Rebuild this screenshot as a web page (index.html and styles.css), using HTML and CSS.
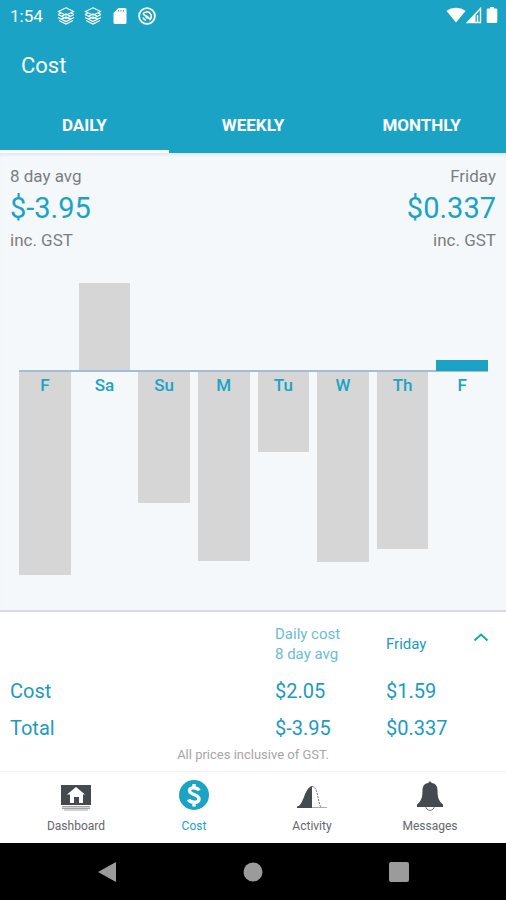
FILE: index.html
```
<!DOCTYPE html>
<html lang="en">

<head>
    <meta charset="UTF-8">
    <meta name="viewport" content="width=device-width, initial-scale=1.0">
    <title>Cost</title>
    <link rel="stylesheet" href="styles.css">
</head>

<body>
    <header class="header">
        <div class="status">
            <span class="time">1:54</span>
            <svg class="layers" width="18" height="18" viewBox="0 0 18 18">
                <path d="M9 .800L16.500 4.500 9 8.200 1.500 4.500zM1 7.500L9 11.500l8-4M1 10.500L9 14.500l8-4M2 13.500L9 17l7-3.500M1 7.500L4 6M17 7.500L14 6M4 9.500l5-2.500 5 2.500M4 12.500L9 10l5 2.500" />
            </svg>
            <svg class="layers" width="18" height="18" viewBox="0 0 18 18">
                <path d="M9 .800L16.500 4.500 9 8.200 1.500 4.500zM1 7.500L9 11.500l8-4M1 10.500L9 14.500l8-4M2 13.500L9 17l7-3.500M1 7.500L4 6M17 7.500L14 6M4 9.500l5-2.500 5 2.500M4 12.500L9 10l5 2.500" />
            </svg>
            <svg width="18" height="18" viewBox="0 0 18 18">
                <path fill="#fff" fill-rule="evenodd" d="M7.500 1H14a1.500 1.500 0 0 1 1.500 1.500v13A1.500 1.500 0 0 1 14 17H4a1.500 1.500 0 0 1-1.500-1.500V6zM7 3v1.500h1V3zM9.500 3v1.500h1V3zM12 3v1.500h1V3z" />
            </svg>
            <svg width="18" height="18" viewBox="0 0 18 18">
                <circle cx="9" cy="9" r="7.900" fill="none" stroke="#fff" stroke-width="1.800" />
                <path fill="none" stroke="#fff" stroke-width="1.600" d="M5 7a4.500 4.500 0 1 1 6.500 6M5 7l7 5M5 10.500a4 4 0 0 0 3 2.700" />
                <circle cx="9" cy="10" r="1.600" fill="#fff" />
            </svg>
            <div class="signals">
                <svg width="20" height="18" viewBox="0 0 20 18">
                    <path fill="#fff" d="M.500 4C6-.200 14-.200 19.500 4L10 15.500z" />
                </svg>
                <svg width="17" height="18" viewBox="0 0 17 18">
                    <path fill="none" stroke="#fff" stroke-width="1.400" d="M14.500 1.500v14H1.500zM11.500 8v7" />
                    <path fill="#fff" d="M9.500 7v9H1z" />
                </svg>
                <svg width="18" height="18" viewBox="0 0 18 18">
                    <path fill="#fff" d="M7 0h4v1.500h2a1.300 1.300 0 0 1 1.300 1.300v12A1.300 1.300 0 0 1 13 16.100H5a1.300 1.300 0 0 1-1.300-1.300v-12A1.300 1.300 0 0 1 5 1.500h2z" />
                </svg>
            </div>
        </div>
        <h1 class="title">Cost</h1>
        <div class="tabs">
            <button class="tab tab-selected" type="button">DAILY</button>
            <button class="tab" type="button">WEEKLY</button>
            <button class="tab" type="button">MONTHLY</button>
        </div>
    </header>

    <main class="main">
        <div class="summary">
            <div>
                <p>8 day avg</p>
                <p class="amount">$-3.95</p>
                <p>inc. GST</p>
            </div>
            <div class="summary-right">
                <p>Friday</p>
                <p class="amount">$0.337</p>
                <p>inc. GST</p>
            </div>
        </div>

        <div class="chart">
            <!-- credits above the line, costs below -->
            <div class="row row-up">
                <div class="bar"></div>
                <div class="bar" style="height: 87px"></div>
                <div class="bar"></div>
                <div class="bar"></div>
                <div class="bar"></div>
                <div class="bar"></div>
                <div class="bar"></div>
                <div class="bar bar-selected" style="height: 11px"></div>
            </div>
            <div class="row row-down">
                <div class="bar" style="height: 203px">F</div>
                <div class="bar bar-empty">Sa</div>
                <div class="bar" style="height: 131px">Su</div>
                <div class="bar" style="height: 189px">M</div>
                <div class="bar" style="height: 80px">Tu</div>
                <div class="bar" style="height: 190px">W</div>
                <div class="bar" style="height: 177px">Th</div>
                <div class="bar bar-empty">F</div>
            </div>
        </div>
    </main>

    <section class="details">
        <table class="costs">
            <thead>
                <tr>
                    <td></td>
                    <th class="average" scope="col">Daily cost<br>8 day avg</th>
                    <th scope="col">Friday</th>
                    <td class="toggle-cell">
                        <button class="toggle" type="button" aria-label="Collapse">
                            <svg width="16" height="10" viewBox="0 0 16 10">
                                <path fill="none" stroke="#12a8b0" stroke-width="2" d="M1.500 8.500L8 2.500l6.500 6" />
                            </svg>
                        </button>
                    </td>
                </tr>
            </thead>
            <tbody>
                <tr>
                    <th scope="row">Cost</th>
                    <td>$2.05</td>
                    <td colspan="2">$1.59</td>
                </tr>
                <tr>
                    <th scope="row">Total</th>
                    <td>$-3.95</td>
                    <td colspan="2">$0.337</td>
                </tr>
            </tbody>
        </table>
        <p class="note">All prices inclusive of GST.</p>
    </section>

    <nav class="nav">
        <a href="#dashboard">
            <svg width="32" height="32" viewBox="0 0 32 32">
                <path fill="#454a50" d="M1 6h30v20H1z" />
                <path fill="#fff" d="M16 8l9 7.500h-2V24h-4v-6h-5v6h-4v-8.500H7z" />
                <path fill="#a4a4a4" d="M2 27h28v1.500H2zM2 29h28v1H2zM4 30.500h24v1H4z" />
            </svg>
            <span>Dashboard</span>
        </a>
        <a class="nav-selected" href="#cost">
            <svg width="32" height="32" viewBox="0 0 32 32">
                <circle cx="16" cy="16" r="15" fill="#1ba3c6" />
                <path fill="none" stroke="#fff" stroke-width="3.400" d="M21 11.500C20 8.500 12 7.500 11.500 11.500c-.4 4.500 9.500 3.500 9.500 8.500 0 4.500-9 4-10.500.5M16 5v4M16 23v4.500" />
            </svg>
            <span>Cost</span>
        </a>
        <a href="#activity">
            <svg width="32" height="32" viewBox="0 0 32 32">
                <path fill="#454a50" d="M1 29v-1.500c7-1 7-18.500 15-20.500v22z" />
                <path fill="none" stroke="#777" stroke-dasharray="2 1" d="M16 7.500c6-1 6 18 9 20.500" />
                <path fill="none" stroke="#aaa" d="M16 28.500h15" />
            </svg>
            <span>Activity</span>
        </a>
        <a href="#messages">
            <svg width="32" height="32" viewBox="0 0 32 32">
                <circle cx="16" cy="27" r="4.300" fill="#fff" stroke="#777" />
                <path fill="#454a50" d="M14.500 4c0-2 3-2 3 0 4.500.5 6 3.500 6 7.500 0 7.500 1.500 10.500 5.500 14V28H3v-2.500C7 22 8.500 19 8.500 11.500c0-4 1.500-7 6-7.500z" />
            </svg>
            <span>Messages</span>
        </a>
    </nav>

    <footer class="system">
        <button type="button" aria-label="Back">
            <svg width="22" height="22" viewBox="0 0 22 22">
                <path fill="#9b9b9b" d="M20 1v20L2 11z" />
            </svg>
        </button>
        <button type="button" aria-label="Home">
            <svg width="22" height="22" viewBox="0 0 22 22">
                <circle cx="11" cy="11" r="9.500" fill="#9b9b9b" />
            </svg>
        </button>
        <button type="button" aria-label="Recent apps">
            <svg width="22" height="22" viewBox="0 0 22 22">
                <rect x="1" y="1" width="20" height="20" rx="2" fill="#9b9b9b" />
            </svg>
        </button>
    </footer>
</body>

</html>
```
FILE: styles.css
```
* {
    margin: 0;
    padding: 0;
    box-sizing: border-box;
}

body {
    display: flex;
    flex-direction: column;
    min-height: 100vh;
    font-family: Roboto, "Liberation Sans", sans-serif;
    background: #fff;
    color: #7b7e81;
}

svg {
    display: block;
}

button {
    border: none;
    background: none;
    font-family: inherit;
    cursor: pointer;
}

.header {
    background: #1ba3c6;
    color: #fff;
}

.status {
    display: flex;
    align-items: center;
    gap: 9px;
    height: 32px;
    padding: 0 5px 0 10px;
}

.time {
    margin-right: 5px;
    font-size: 17px;
}

.layers path {
    fill: none;
    stroke: #fff;
    stroke-width: 1.2;
}

.signals {
    display: flex;
    margin-left: auto;
}

.title {
    height: 66px;
    padding: 0 21px;
    font-size: 22px;
    font-weight: 400;
    line-height: 68px;
}

.tabs {
    display: flex;
}

.tab {
    flex: 1;
    height: 55px;
    padding-top: 2px;
    border-bottom: 3px solid transparent;
    font-size: 17px;
    font-weight: 700;
    color: #fff;
}

.tab-selected {
    border-color: #fff;
}

.main {
    flex: 1;
    padding-top: 12px;
    background: #f4f8fb;
    border-bottom: 2px solid #d8dadc;
    box-shadow: inset 0 3px 3px -1px #e3e7ea;
}

.summary {
    display: flex;
    justify-content: space-between;
    padding: 0 10px;
    font-size: 17px;
    line-height: 22px;
}

.summary-right {
    text-align: right;
}

.amount {
    font-size: 29px;
    line-height: 42px;
    color: #1ba3c6;
}

.chart {
    padding: 32px 18px 35px 19px;
}

.row {
    display: flex;
    gap: 8px;
}

.row-up {
    align-items: flex-end;
    height: 87px;
}

.row-down {
    align-items: flex-start;
    border-top: 2px solid #a5bcd5;
}

.bar {
    flex: 1;
    background: #d7d6d7;
    font-size: 17px;
    font-weight: 500;
    line-height: 26px;
    text-align: center;
    color: #1ba3c6;
}

.bar-selected {
    position: relative;
    top: 1px;
    background: #1ba3c6;
}

.bar-empty {
    background: none;
}

.details {
    padding: 10px 10px 8px;
}

.costs {
    width: 100%;
    border-collapse: collapse;
    table-layout: fixed;
    font-size: 20px;
    line-height: 37px;
    color: #1b9bc0;
}

.costs th,
.costs td {
    text-align: left;
    font-weight: 400;
}

.costs thead {
    font-size: 15px;
    line-height: 20px;
}

.costs thead tr {
    height: 51px;
}

.costs thead td:first-child {
    width: 265px;
}

.costs .average {
    width: 111px;
    color: #6bbcd5;
}

.costs thead th {
    padding-bottom: 8px;
}

.costs .toggle-cell {
    width: 40px;
    vertical-align: top;
}

.toggle {
    margin: 10px 0 0 17px;
}

.note {
    font-size: 13px;
    line-height: 16px;
    text-align: center;
    color: #a6a6a6;
}

.nav {
    display: flex;
    padding: 0 17px;
    border-top: 1px solid #f1f1f1;
}

.nav a {
    display: flex;
    flex: 1;
    flex-direction: column;
    align-items: center;
    gap: 6px;
    padding: 7px 0 8px;
    font-size: 12px;
    line-height: 18px;
    text-decoration: none;
    color: #62676b;
}

.nav .nav-selected {
    color: #1ba3c6;
}

.system {
    display: flex;
    justify-content: center;
    gap: 124px;
    height: 58px;
    background: #000;
}
```
